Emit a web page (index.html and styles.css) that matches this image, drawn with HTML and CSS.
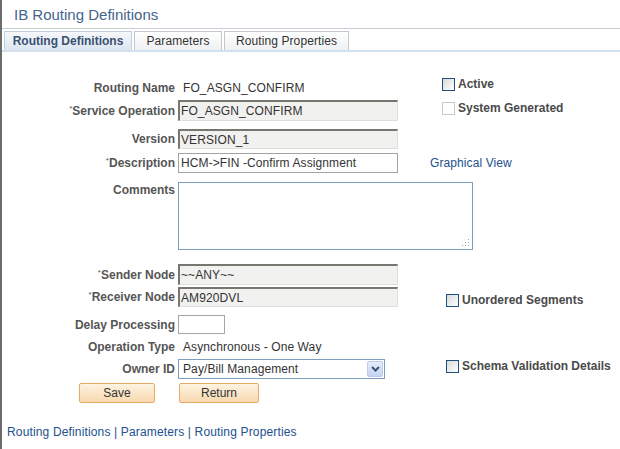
FILE: index.html
```html
<!DOCTYPE html>
<html>
<head>
    <title>IB Routing Definitions</title>
    <link rel="stylesheet" href="styles.css">
</head>
<body>
    <div id="page">
        <h1 id="title">IB Routing Definitions</h1>
        <div id="tabs">
            <span class="tab active tab-def">Routing Definitions</span>
            <span class="tab tab-par">Parameters</span>
            <span class="tab tab-prop">Routing Properties</span>
        </div>

        <div id="form">
            <div class="row r1">
                <span class="lbl">Routing Name</span>
                <span class="value">FO_ASGN_CONFIRM</span>
                <span class="check c-active"><span class="box"></span>Active</span>
            </div>
            <div class="row r2">
                <span class="lbl"><sup>*</sup>Service Operation</span>
                <input type="text" class="field ro h21" value="FO_ASGN_CONFIRM" readonly>
                <span class="check c-sys"><span class="box off"></span>System Generated</span>
            </div>
            <div class="row r3">
                <span class="lbl">Version</span>
                <input type="text" class="field ro h20" value="VERSION_1" readonly>
            </div>
            <div class="row r4">
                <span class="lbl"><sup>*</sup>Description</span>
                <input type="text" class="field edit" value="HCM-&gt;FIN -Confirm Assignment">
                <a class="link c-graph">Graphical View</a>
            </div>
            <div class="row r5">
                <span class="lbl top">Comments</span>
                <div class="comments">
                    <svg class="grip" width="8" height="8" viewBox="0 0 8 8">
                        <rect x="6" y="0" width="1" height="1" fill="#a9a993"/>
                        <rect x="3" y="3" width="1" height="1" fill="#a9a993"/>
                        <rect x="6" y="3" width="1" height="1" fill="#a9a993"/>
                        <rect x="0" y="6" width="1" height="1" fill="#a9a993"/>
                        <rect x="3" y="6" width="1" height="1" fill="#a9a993"/>
                        <rect x="6" y="6" width="1" height="1" fill="#a9a993"/>
                    </svg>
                </div>
            </div>
            <div class="row r6">
                <span class="lbl"><sup>*</sup>Sender Node</span>
                <input type="text" class="field ro h21" value="~~ANY~~" readonly>
            </div>
            <div class="row r7">
                <span class="lbl"><sup>*</sup>Receiver Node</span>
                <input type="text" class="field ro h20" value="AM920DVL" readonly>
                <span class="check c-unord"><span class="box"></span>Unordered Segments</span>
            </div>
            <div class="row r8">
                <span class="lbl">Delay Processing</span>
                <input type="text" class="field small">
            </div>
            <div class="row r9">
                <span class="lbl">Operation Type</span>
                <span class="value">Asynchronous - One Way</span>
            </div>
            <div class="row r10">
                <span class="lbl">Owner ID</span>
                <div class="select">
                    <span>Pay/Bill Management</span>
                    <span class="arrow">
                        <svg width="9" height="6" viewBox="0 0 9 6">
                            <path d="M1 1 L4.5 4.5 L8 1" stroke="#3e5274" stroke-width="2" fill="none"/>
                        </svg>
                    </span>
                </div>
                <span class="check c-schema"><span class="box"></span>Schema Validation Details</span>
            </div>
            <div id="buttons">
                <button class="btn save">Save</button>
                <button class="btn ret">Return</button>
            </div>
        </div>

        <div id="footer">
            <a class="link">Routing Definitions</a> | <a class="link">Parameters</a> | <a class="link">Routing Properties</a>
        </div>
    </div>
</body>
</html>
```

FILE: styles.css
```css
body{
    margin: 0px;
    background-color: white;
    font-family: "Liberation Sans", Arial, sans-serif;
    font-size: 12px;
    color: #333333;
}

#page{
    min-height: 100vh;
    box-sizing: border-box;
    border-left: 2px solid #6b6b6b;
}

#title{
    margin: 0px;
    padding: 5px 0px 3px 12px;
    font-size: 15px;
    font-weight: normal;
    line-height: 20px;
    color: #46648c;
    border-bottom: 1px solid #c9cdd2;
}

#tabs{
    display: flex;
    gap: 1px;
    margin-top: 2px;
    padding-left: 2px;
    border-bottom: 2px solid #d3e0ee;
}

.tab{
    box-sizing: border-box;
    height: 19px;
    line-height: 18px;
    text-align: center;
    border: 1px solid #c3c8cf;
    border-bottom: none;
    background: linear-gradient(#ffffff, #eef0f2);
    color: #333333;
    letter-spacing: 0.1px;
}

.tab.active{
    font-weight: bold;
    color: #3b5170;
    border-color: #c2cedd;
    background: linear-gradient(#f6f8fb, #dbe6f2);
    letter-spacing: 0px;
}

.tab-def{ width: 128px; }
.tab-par{ width: 88px; margin-left: 1px; }
.tab-prop{ width: 125px; margin-left: 1px; }

#form{
    margin-top: 26px;
}

.row{
    display: grid;
    grid-template-columns: 176px 252px 1fr;
    align-items: center;
}

.lbl{
    padding-right: 3px;
    text-align: right;
    font-weight: bold;
    color: #555555;
    white-space: nowrap;
}

.lbl sup{
    font-size: 8px;
    font-weight: normal;
    vertical-align: 4px;
}

.lbl.top{
    align-self: start;
    line-height: 16px;
}

.value{
    padding-left: 5px;
    color: #333333;
    letter-spacing: 0.1px;
}

.r1{ height: 20px; }
.r2{ margin-top: 2px; height: 21px; }
.r3{ margin-top: 8px; }
.r4{ margin-top: 4px; }
.r5{ margin-top: 9px; }
.r6{ margin-top: 14px; }
.r7{ margin-top: 2px; height: 20px; }
.r8{ margin-top: 8px; }
.r9{ margin-top: 4px; height: 18px; }
.r10{ margin-top: 3px; height: 20px; }

.field{
    box-sizing: border-box;
    margin: 0px;
    font-family: "Liberation Sans", Arial, sans-serif;
    font-size: 12px;
    color: #333333;
    letter-spacing: 0.1px;
    outline: none;
}

.ro{
    width: 220px;
    padding: 0px 0px 0px 1px;
    background-color: #f1f1ef;
    border-top: 2px solid #77776f;
    border-left: 2px solid #77776f;
    border-right: 1px solid #dededa;
    border-bottom: 1px solid #dededa;
}

.h21{ height: 21px; }
.h20{ height: 20px; }

.edit{
    width: 220px;
    height: 20px;
    padding: 0px 0px 0px 2px;
    background-color: white;
    border: 1px solid #a3a3a3;
}

.small{
    width: 47px;
    height: 19px;
    padding: 0px;
    background-color: white;
    border: 1px solid #a6a6a6;
}

.comments{
    grid-column: 2 / 4;
    position: relative;
    box-sizing: border-box;
    width: 295px;
    height: 68px;
    border: 1px solid #809fbd;
    background-color: white;
}

.grip{
    position: absolute;
    right: 2px;
    bottom: 2px;
}

.select{
    display: flex;
    align-items: center;
    justify-content: space-between;
    box-sizing: border-box;
    width: 207px;
    height: 20px;
    padding: 0px 1px 0px 4px;
    border: 1px solid #7f9ebd;
    background-color: white;
    color: #333333;
    letter-spacing: 0.1px;
}

.arrow{
    display: flex;
    align-items: center;
    justify-content: center;
    box-sizing: border-box;
    width: 16px;
    height: 16px;
    border: 1px solid #bccbe9;
    border-radius: 2px;
    background: linear-gradient(#e6edfb, #c4d3f2);
}

.check{
    display: flex;
    align-items: center;
    gap: 3px;
    align-self: start;
    font-weight: bold;
    color: #4a4a4a;
    white-space: nowrap;
    line-height: 13px;
}

.box{
    box-sizing: border-box;
    width: 13px;
    height: 13px;
    border: 1px solid #1d4f82;
    background: linear-gradient(135deg, #d9d9d9, #ffffff);
}

.box.off{
    border-color: #c9c9bd;
    background: #ffffff;
}

.c-active{ margin-left: 12px; margin-top: 0px; }
.c-sys{ margin-left: 12px; margin-top: 2px; }
.c-unord{ margin-left: 16px; margin-top: 7px; }
.c-schema{ margin-left: 16px; margin-top: 1px; }

.link{
    color: #21508d;
    text-decoration: none;
}

.c-graph{
    align-self: center;
    letter-spacing: 0.1px;
}

#buttons{
    display: flex;
    gap: 24px;
    margin-top: 4px;
    padding-left: 77px;
}

.btn{
    box-sizing: border-box;
    height: 20px;
    padding: 0px;
    font-family: "Liberation Sans", Arial, sans-serif;
    font-size: 12px;
    color: #333333;
    border: 1px solid #e3aa68;
    border-radius: 2px;
    background: linear-gradient(#fdf3e2, #f8d9ae);
}

.save{ width: 76px; }
.ret{ width: 80px; }

#footer{
    margin-top: 22px;
    padding-left: 5px;
    line-height: 14px;
    color: #21508d;
    letter-spacing: 0.15px;
}
```
